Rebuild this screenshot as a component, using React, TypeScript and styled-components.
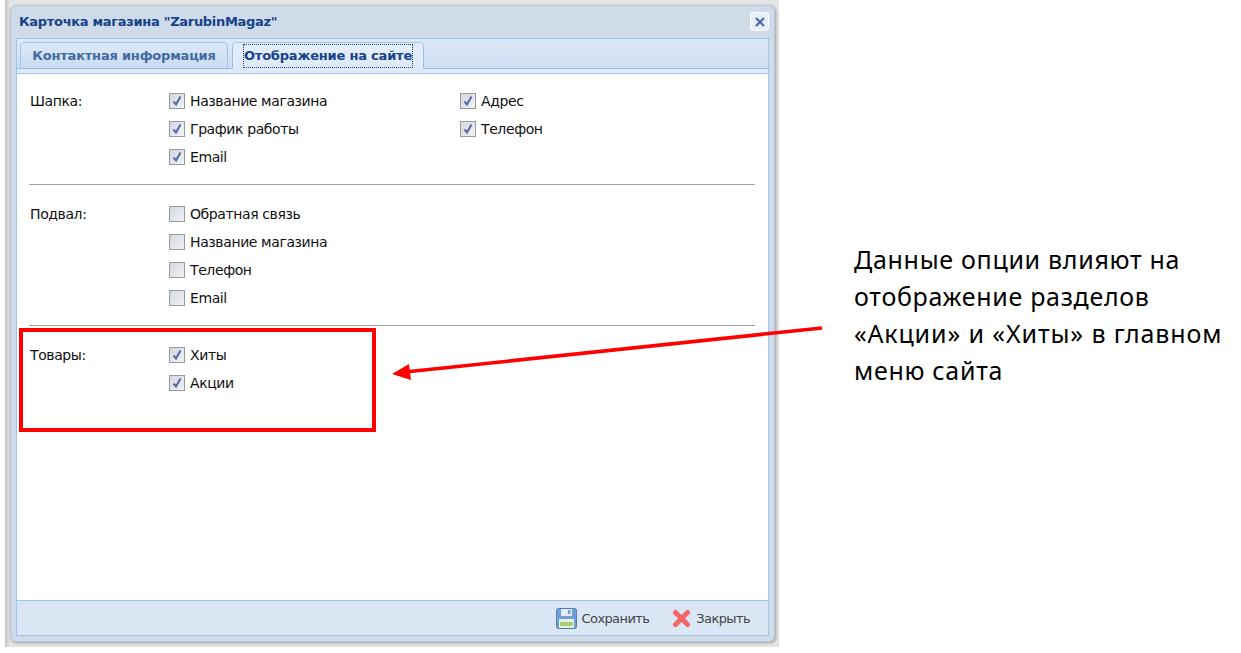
import React from 'react';
import styled, { createGlobalStyle } from 'styled-components';

const GlobalStyle = createGlobalStyle`
    html, body {
        margin: 0;
        padding: 0;
        background: #fff;
    }
    body {
        width: 1241px;
        height: 653px;
        overflow: hidden;
        font-family: "Open Sans", "Liberation Sans", sans-serif;
    }
`;

const Page = styled.div`
    position: relative;
    display: flex;
    width: 1241px;
    height: 653px;
`;

const Backdrop = styled.div`
    width: 774px;
    height: 647px;
    margin-left: 5px;
    padding: 5px 3px 0 5px;
    box-sizing: border-box;
    background: linear-gradient(90deg, #c4c4c4, #e4e4e4 5px);
    flex: none;
`;

const Win = styled.div`
    display: flex;
    flex-direction: column;
    width: 765px;
    height: 637px;
    box-sizing: border-box;
    padding: 0 5px 5px 5px;
    background: #cfdbe8;
    border: 1px solid #b4c6da;
    border-radius: 6px;
    box-shadow: 1px 1px 3px rgba(0, 0, 0, 0.3);
`;

const TitleBar = styled.div`
    display: flex;
    align-items: center;
    justify-content: space-between;
    height: 32px;
    flex: none;
    padding-left: 3px;
    padding-bottom: 1px;
    box-sizing: border-box;
    font: bold 13px "DejaVu Sans", sans-serif;
    color: #15428b;
`;

const TitleText = styled.span`
    letter-spacing: -0.3px;
`;

const CloseBtn = styled.button`
    display: flex;
    align-items: center;
    justify-content: center;
    width: 19px;
    height: 19px;
    padding: 0;
    background: #e6effa;
    border: 1px solid #fff;
    border-radius: 3px;
`;

const TabStrip = styled.div`
    display: flex;
    align-items: flex-end;
    gap: 4px;
    height: 31px;
    flex: none;
    padding-left: 3px;
    box-sizing: border-box;
    background: linear-gradient(#dde9f7, #cfdff1);
    border: 1px solid #a3c2e8;
    border-bottom: 1px solid #99bbe8;
`;

const Tab = styled.div<{ active?: boolean }>`
    display: flex;
    align-items: center;
    justify-content: center;
    width: ${props => props.active ? '192px' : '208px'};
    height: 27px;
    margin-bottom: -1px;
    box-sizing: border-box;
    background: ${props => props.active ? 'linear-gradient(#e4eefb, #dfeaf8)' : 'linear-gradient(#dce8f7, #c9dcf2)'};
    border: 1px solid #a3c2e8;
    border-bottom: ${props => props.active ? '1px solid #dfeaf8' : '1px solid #99bbe8'};
    border-radius: 5px 5px 0 0;
    font: bold 13px "DejaVu Sans", sans-serif;
    letter-spacing: -0.2px;
    color: ${props => props.active ? '#15428b' : '#416aa3'};
`;

const FocusLabel = styled.span`
    outline: 1px dotted #15428b;
    line-height: 22px;
`;

const TabGap = styled.div`
    height: 4px;
    flex: none;
    background: #dfeaf8;
    border: 1px solid #a3c2e8;
    border-top: none;
`;

const Body = styled.div`
    flex: 1;
    padding: 13px 13px 0 12px;
    background: #fff;
    border-left: 1px solid #a3c2e8;
    border-right: 1px solid #a3c2e8;
`;

const Section = styled.div`
    display: flex;
    padding-bottom: 13px;
    border-bottom: 1px solid #a0a0a0;
    margin-bottom: 15px;
    &:last-child {
        border-bottom: none;
    }
`;

const SectionLabel = styled.div`
    width: 140px;
    flex: none;
    padding-left: 1px;
    box-sizing: border-box;
    font: 14px/28px "DejaVu Sans", sans-serif;
    letter-spacing: -0.4px;
    color: #111;
`;

const Options = styled.div`
    display: grid;
    grid-template-columns: 291px 290px;
    grid-auto-rows: 28px;
`;

const Option = styled.label`
    display: flex;
    align-items: center;
    gap: 5px;
    font: 14px "DejaVu Sans", sans-serif;
    letter-spacing: -0.4px;
    color: #111;
`;

const Box = styled.span`
    display: flex;
    align-items: center;
    justify-content: center;
    width: 16px;
    height: 16px;
    box-sizing: border-box;
    background: linear-gradient(135deg, #d3d7de, #f2f3f6);
    border: 1px solid #9a9a9a;
`;

const Footer = styled.div`
    display: flex;
    align-items: center;
    justify-content: flex-end;
    gap: 23px;
    height: 36px;
    flex: none;
    padding-right: 18px;
    box-sizing: border-box;
    background: linear-gradient(#d9e5f4, #dde8f6);
    border: 1px solid #a3c2e8;
`;

const FooterBtn = styled.div`
    display: flex;
    align-items: center;
    gap: 5px;
    font: 13px "DejaVu Sans", sans-serif;
    letter-spacing: -0.6px;
    color: #444;
`;

const RedBox = styled.div`
    position: absolute;
    left: 19px;
    top: 328px;
    width: 357px;
    height: 104px;
    box-sizing: border-box;
    border: 4px solid #ff0000;
`;

const Arrow = styled.svg`
    position: absolute;
    left: 385px;
    top: 320px;
`;

const Note = styled.div`
    position: absolute;
    left: 854px;
    top: 241px;
    width: 385px;
    font-family: "Noto Sans", "Open Sans", sans-serif;
    font-size: 25px;
    line-height: 37px;
    color: #000;
`;

const NoteLine = styled.div<{ wide?: boolean }>`
    letter-spacing: ${props => props.wide ? '0.9px' : '0.7px'};
    white-space: nowrap;
`;

const Check = ({ on }: { on: boolean }) => (
    <Box>
        {on && (
            <svg width="12" height="12" viewBox="0 0 12 12">
                <path d="M2.5 6.5 L5 9.5 L9.5 1.5" fill="none" stroke="#5468ad" strokeWidth="2" />
            </svg>
        )}
    </Box>
);

const Opt = ({ label, on }: { label: string; on: boolean }) => (
    <Option>
        <Check on={on} />
        {label}
    </Option>
);

const App: React.FC = () => {
    return (
        <Page>
            <GlobalStyle />
            <Backdrop>
                <Win>
                    <TitleBar>
                        <TitleText>Карточка магазина "ZarubinMagaz"</TitleText>
                        <CloseBtn>
                            <svg width="12" height="12" viewBox="0 0 12 12">
                                <path d="M2 2 L10 10 M10 2 L2 10" stroke="#4a68ad" strokeWidth="2.2" />
                            </svg>
                        </CloseBtn>
                    </TitleBar>
                    <TabStrip>
                        <Tab>Контактная информация</Tab>
                        <Tab active><FocusLabel>Отображение на сайте</FocusLabel></Tab>
                    </TabStrip>
                    <TabGap />
                    <Body>
                        <Section>
                            <SectionLabel>Шапка:</SectionLabel>
                            <Options>
                                <Opt label="Название магазина" on />
                                <Opt label="Адрес" on />
                                <Opt label="График работы" on />
                                <Opt label="Телефон" on />
                                <Opt label="Email" on />
                            </Options>
                        </Section>
                        <Section>
                            <SectionLabel>Подвал:</SectionLabel>
                            <Options>
                                <Opt label="Обратная связь" on={false} />
                                <span />
                                <Opt label="Название магазина" on={false} />
                                <span />
                                <Opt label="Телефон" on={false} />
                                <span />
                                <Opt label="Email" on={false} />
                            </Options>
                        </Section>
                        <Section>
                            <SectionLabel>Товары:</SectionLabel>
                            <Options>
                                <Opt label="Хиты" on />
                                <span />
                                <Opt label="Акции" on />
                            </Options>
                        </Section>
                    </Body>
                    <Footer>
                        <FooterBtn>
                            <svg width="21" height="21" viewBox="0 0 21 21">
                                <rect x="0.5" y="0.5" width="20" height="20" rx="2" fill="#6f9fd6" stroke="#4f80ba" />
                                <rect x="5" y="1" width="11" height="7" fill="#e4ecf6" />
                                <rect x="12" y="2" width="2.5" height="4" fill="#6f9fd6" />
                                <rect x="3" y="11" width="15" height="9" fill="#e6f0dc" />
                                <rect x="4" y="14" width="13" height="4" fill="#a6d07f" />
                            </svg>
                            Сохранить
                        </FooterBtn>
                        <FooterBtn>
                            <svg width="19" height="19" viewBox="0 0 19 19">
                                <path d="M3.5 3.5 L15.5 15.5 M15.5 3.5 L3.5 15.5" stroke="#f4686a" strokeWidth="5" strokeLinecap="round" />
                            </svg>
                            Закрыть
                        </FooterBtn>
                    </Footer>
                </Win>
            </Backdrop>
            <RedBox />
            <Arrow width="445" height="65" viewBox="0 0 445 65">
                <path d="M437 8 L20 52" stroke="#ff0000" strokeWidth="3.5" />
                <path d="M7 54 L24 44 L26 60 Z" fill="#ff0000" />
            </Arrow>
            <Note>
                <NoteLine>Данные опции влияют на</NoteLine>
                <NoteLine>отображение разделов</NoteLine>
                <NoteLine wide>«Акции» и «Хиты» в главном</NoteLine>
                <NoteLine>меню сайта</NoteLine>
            </Note>
        </Page>
    );
};

export default App;
